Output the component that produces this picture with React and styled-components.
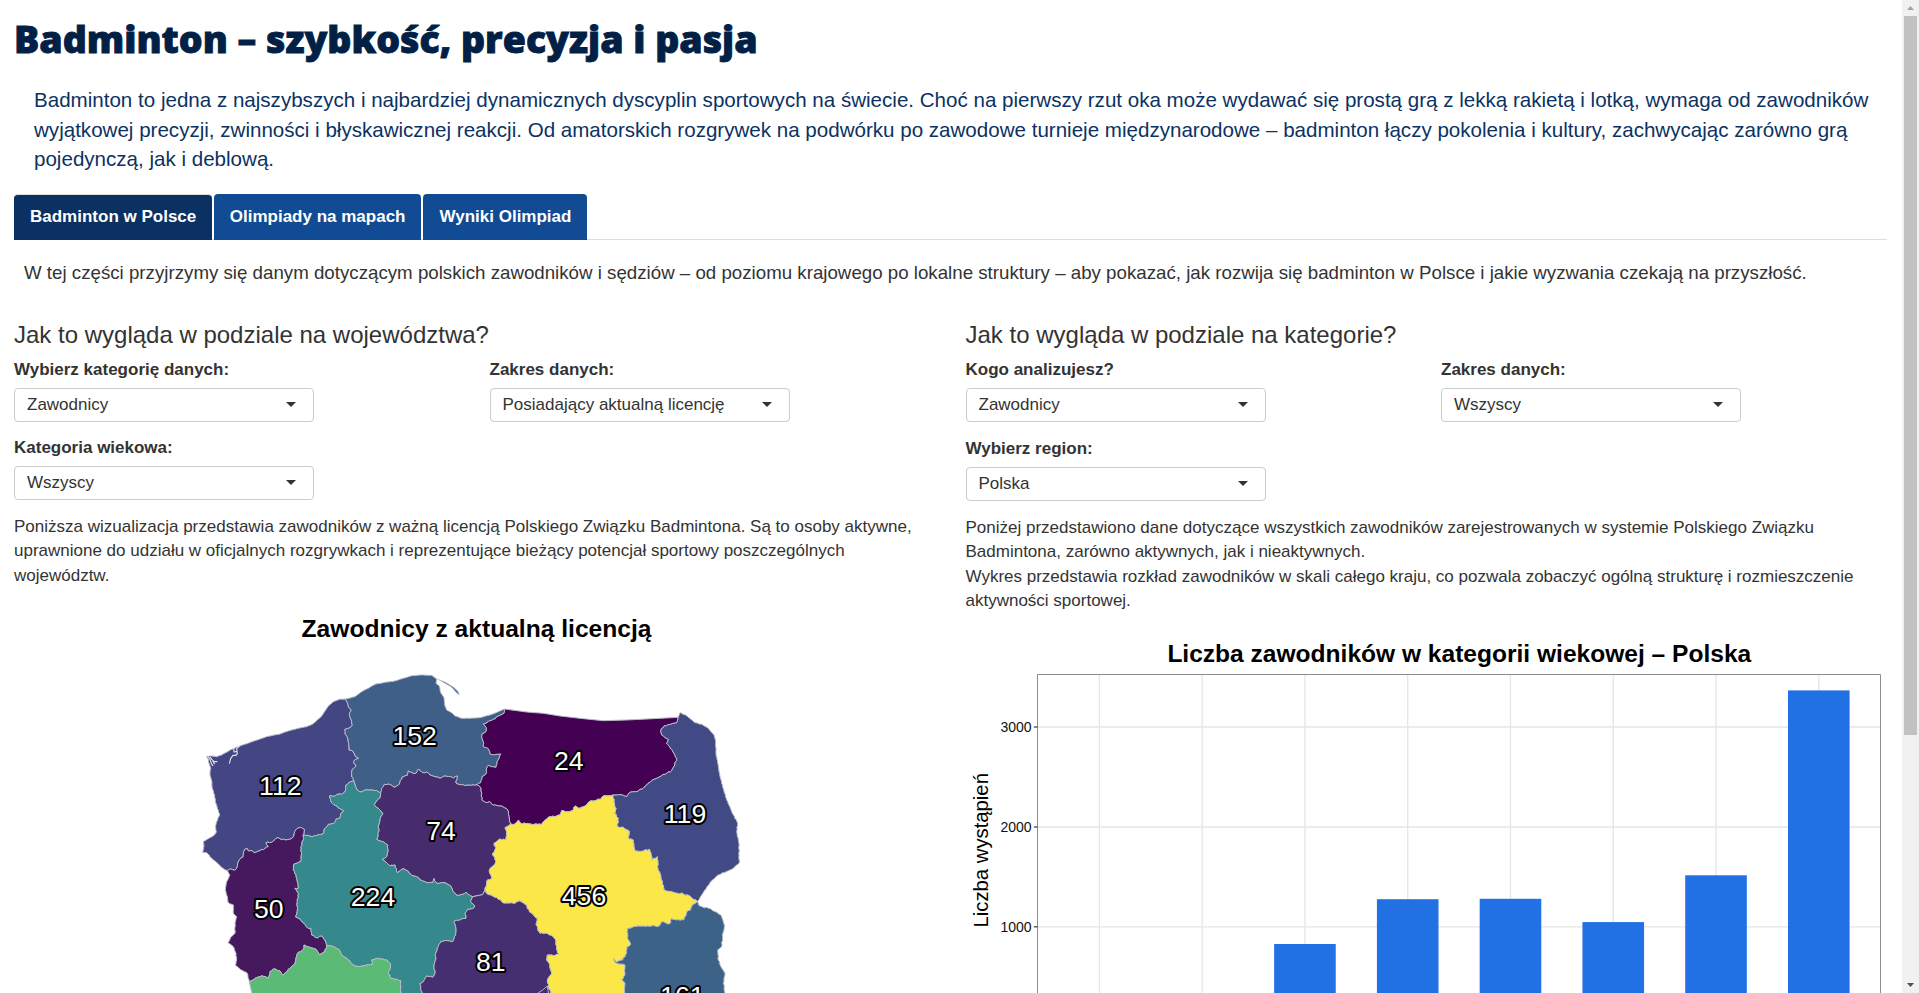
import React from "react";
import styled, { createGlobalStyle } from "styled-components";

const GlobalStyle = createGlobalStyle`
  * { box-sizing: border-box; }
  html, body { margin: 0; padding: 0; overflow: hidden; }
  body {
    background: #fff;
    color: #333;
    font-family: "Liberation Sans", Arial, sans-serif;
    font-size: 17px;
  }
`;

const Window = styled.div`
  display: flex;
  width: 1919px;
  height: 993px;
  overflow: hidden;
`;

const Page = styled.main`
  flex: 1;
  min-width: 0;
  height: 993px;
  overflow: hidden;
  padding: 0 15px 0 14px;
`;

const Title = styled.h1`
  margin: 0;
  padding-top: 14px;
  height: 78px;
  color: #021f45;
  font-family: "Open Sans", "Noto Sans", sans-serif;
  font-size: 37.5px;
  font-weight: 800;
  line-height: 50px;
  -webkit-text-stroke: 0.9px #021f45;
  white-space: nowrap;
`;

const Intro = styled.p`
  margin: 0;
  padding: 7px 0 0 20px;
  height: 116px;
  color: #0b3263;
  font-size: 20.57px;
  line-height: 29.5px;
`;

const TabBar = styled.nav`
  display: flex;
  align-items: flex-end;
  gap: 2px;
  height: 46px;
  border-bottom: 1px solid #ddd;
`;

const Tab = styled.button`
  height: 46px;
  margin-bottom: -1px;
  padding: ${(p) => (p.$active ? "0 15.5px 2px 16px" : "0 16px 1px")};
  border: 0;
  border-top: ${(p) => (p.$active ? "1px solid #ddd" : "0")};
  border-radius: 4px 4px 0 0;
  background: ${(p) => (p.$active ? "#0a3161" : "#114b94")};
  color: #fff;
  font: bold 17px "Liberation Sans", Arial, sans-serif;
  white-space: nowrap;
`;

const Lead = styled.p`
  margin: 0;
  padding: 20px 0 0 10px;
  height: 73px;
  font-size: 18.72px;
  line-height: 26px;
  white-space: nowrap;
`;

const Columns = styled.div`
  display: grid;
  grid-template-columns: 951.5px 1fr;
`;

const Column = styled.section`
  min-width: 0;
`;

const Heading = styled.h3`
  margin: 0;
  padding-top: 8px;
  height: 44px;
  font-size: 24px;
  font-weight: 400;
  line-height: 27px;
`;

const Fields = styled.div`
  display: grid;
  grid-template-columns: 475.5px 300px;
  row-gap: ${(p) => p.$gap}px;
`;

const Field = styled.label`
  display: block;
  width: 300px;
`;

const FieldLabel = styled.span`
  display: block;
  height: 31px;
  font-weight: bold;
  line-height: 26px;
  white-space: nowrap;
`;

const Select = styled.span`
  display: flex;
  align-items: center;
  justify-content: space-between;
  height: 34px;
  padding: 0 17px 0 12px;
  border: 1px solid #ccc;
  border-radius: 4px;
  white-space: nowrap;
`;

const Caret = styled.i`
  width: 0;
  height: 0;
  margin-bottom: 1px;
  border: 5px solid transparent;
  border-top-color: #333;
  border-bottom: 0;
`;

const Note = styled.p`
  margin: 0;
  padding-top: 15px;
  width: 915px;
  height: ${(p) => p.$height}px;
  line-height: 24.29px;
`;

const Drawing = styled.svg`
  display: block;
  overflow: hidden;
  font-family: "Liberation Sans", Arial, sans-serif;
`;

const Track = styled.aside`
  display: flex;
  flex-direction: column;
  align-items: center;
  width: 17px;
  height: 993px;
  background: #f1f1f1;
`;

const Arrow = styled.svg`
  display: block;
  width: 17px;
  height: 16px;
`;

const Thumb = styled.div`
  width: 13px;
  height: 719px;
  margin-bottom: auto;
  background: #c1c1c1;
`;

/* Borders between voivodeships, in thirds of a pixel. */
const P = (s, dx = 0) =>
  s.split(" ").map((t) => {
    const [x, y] = t.split(",").map(Number);
    return [x + dx, y];
  });

let seed = 7;
const rnd = () => {
  seed = (seed * 16807) % 2147483647;
  return seed / 2147483647 - 0.5;
};
const rough = (pts, amount = 5) => {
  const out = [pts[0]];
  for (let i = 1; i < pts.length; i++) {
    const [ax, ay] = pts[i - 1];
    const [bx, by] = pts[i];
    const len = Math.hypot(bx - ax, by - ay);
    const n = Math.max(1, Math.round(len / 6));
    for (let k = 1; k < n; k++) {
      const t = k / n;
      out.push([ax + (bx - ax) * t + rnd() * amount, ay + (by - ay) * t + rnd() * amount]);
    }
    out.push([bx, by]);
  }
  return out;
};
const rev = (a) => [...a].reverse();

const E = 810;
const zpCoast = rough(P("465,117 448,118 430,125 415,138 405,153 395,168 380,182 368,192 350,200 320,206 295,213 270,222 230,230 195,242 150,258 120,270 95,285 80,290 65,288 50,289"), 1);
const zpWest = rough(P("50,289 55,298 58,312 62,325 60,345 66,365 67,385 74,405 76,425 82,445 89,463 80,485 76,500 79,515 70,528 55,536 40,544 42,558 38,577 50,578 60,590 75,603 90,617 103,628 112,632"), 2);
const zpLub = rough(P("112,632 122,627 134,631 142,620 148,600 158,592 164,568 172,566 175,573 185,572 192,578 210,572 235,560 228,548 245,547 262,533 275,539 298,538 308,533 314,515 322,505 333,502 343,508 340,524"), 3);
const zpWlkp = rough(P("340,524 352,526 368,530 385,524 398,522 405,505 415,493 432,490 438,478 450,474 452,462 461,453 448,445 436,436 425,428 418,408 430,409 440,404 455,403 466,393 468,375 480,365 491,362"), 3);
const zpPom = rough(P("491,362 485,345 487,328 498,318 490,308 494,300 506,295 495,288 490,275 477,270 474,240 468,225 463,210 475,205 487,196 484,180 478,165 484,150 475,140 472,128 465,117"), 3);
const pomCoast = rough(P("465,117 495,110 515,95 535,85 555,73 580,68 610,64 640,55 665,47 695,45 725,46 740,57 738,70 748,78 752,98 762,113 764,135 770,150 785,158 795,168 815,175 840,175 870,173 900,165 925,155 943,147"), 1);
const pomWm = rough(P("943,147 942,160 930,166 910,178 880,192 889,203 888,215 876,222 875,232 880,245 880,260 895,266 900,282 915,284 933,282 924,300 918,322 905,320 895,316 890,324 888,342 876,350 872,368 861,374"), 3);
const pomKp = rough(P("861,374 845,376 825,377 815,374 802,372 797,364 802,348 790,355 782,350 765,348 750,355 738,351 720,345 710,336 698,338 686,327 678,340 665,338 655,333 652,346 636,352 628,372 615,382 600,374 583,373 575,385 572,401"), 3);
const pomWlkp = rough(P("572,401 560,392 540,390 525,390 510,396 500,388 495,375 491,362"), 3);
const wlkpKp = rough(P("572,401 570,412 560,422 552,434 565,445 578,460 570,475 566,495 566,515 560,538 580,545 593,555 594,575 590,590 577,597 590,608 600,618 615,615 622,638 640,626 655,634 665,646 680,650 690,660 710,668 728,668 732,656 740,670 765,668 782,678 788,692 800,706 822,702 828,696 838,705 848,710"), 3);
const kpLodz = P("848,710 868,706 878,704 885,690");
const wlkpLodz = rough(P("848,710 842,725 855,738 850,745 833,748 825,760 828,775 810,780 793,783 797,800 797,825 788,845 770,842 752,845 745,860 737,880 737,900 732,915 735,940 728,952 710,948 700,965 690,970 692,985 700,1010"), 3);
const lubWlkp = rough(P("340,524 340,540 333,560 334,585 332,605 312,612 310,630 318,645 322,665 325,685 315,685 325,700 322,725 322,750 318,772 330,777 345,793 352,803 363,805 365,825 380,833 395,828 405,840 410,857"), 3);
const lubDs = rough(P("410,857 405,875 388,884 378,868 360,862 342,855 340,868 322,880 315,912 300,925 280,945 268,932 250,927 240,935 235,955 215,947 195,955 178,966"), 3);
const lubWest = rough(P("112,632 120,645 110,665 106,690 112,710 115,728 130,735 130,760 140,770 135,790 135,820 122,832 114,848 130,860 138,880 140,900 136,915 150,928 172,940 178,966"), 2);
const wlkpDs = rough(P("410,857 425,858 445,867 455,885 475,900 490,915 510,920 535,915 548,912 545,900 565,895 590,900 602,912 600,925 595,935 602,955 622,958 632,962 632,1010"), 3);
const kpWm = rough(P("51,374 60,380 65,400 65,420 78,428 88,425 100,435 120,438 138,445 145,455 148,475 152,492", E), 3);
const kpMaz = rough(P("152,492 135,503 140,515 138,540 120,537 102,550 108,562 98,580 108,603 96,620 88,630 95,655 82,660 78,680 75,690", E), 4);
const wmMaz = rough(P("152,492 165,492 175,480 182,490 210,492 245,494 255,480 270,470 285,470 300,465 305,452 322,455 340,450 345,438 360,445 380,435 388,425 410,420 422,418 432,407 458,405", E), 4);
const wmPodl = rough(P("458,405 480,404 500,410 508,398 530,395 555,380 575,362 600,350 635,332 645,312 650,295 642,280 630,262 620,250 625,238 605,225 602,212 612,198 635,192 650,188 655,172", E), 3);
const wmCoast = P("133,147 200,156 250,160 300,168 370,176 430,182 500,180 580,176 655,172", E);
const podlEast = rough(P("655,172 660,158 680,167 692,178 705,188 725,193 745,205 762,225 767,245 768,280 775,320 785,370 800,420 815,455 833,490 830,515 836,545 838,608 815,628 790,638 770,648 750,668 735,690 713,724", E), 2);
const mazPodl = rough(P("458,405 462,425 468,445 463,460 475,475 472,500 490,502 508,515 505,535 520,540 525,573 550,573 568,568 573,580 575,600 592,590 592,620 600,640 605,660 612,690 640,697 670,702 690,708 700,718 713,724", E), 4);
const mazLbl = rough(P("713,724 697,735 692,750 680,755 672,780 650,780 635,775 628,792 605,785 598,798 575,798 550,798 520,800 502,805 502,835 512,852 500,862 500,880 488,900 470,906 462,896 466,908 480,912 495,915 495,945 485,960 495,970 492,1010", E), 4);
const lblEast = rough(P("713,724 718,738 745,745 765,755 785,768 793,795 788,830 785,860 773,870 775,900 785,925 795,940 790,970 798,1010", E), 3);
const lodzMaz = rough(P("75,690 80,700 98,708 110,712 130,728 165,730 180,722 200,735 208,755 232,775 228,795 240,820 262,820 280,830 288,845 290,868 297,882 280,887 262,885 260,898 270,915 275,940 262,960 265,980 280,1010", E), 4);

const REGIONS = [
  { fill: "#444583", shape: [zpCoast, zpWest, zpLub, zpWlkp, zpPom] },
  { fill: "#3f5f88", shape: [pomCoast, pomWm, pomKp, pomWlkp, zpPom] },
  { fill: "#440052", shape: [wmCoast, rev(wmPodl), rev(wmMaz), rev(kpWm), rev(pomWm)] },
  { fill: "#414a85", shape: [podlEast, rev(mazPodl), wmPodl] },
  { fill: "#46185e", shape: [rev(lubWest), zpLub, lubWlkp, lubDs] },
  { fill: "#462b6d", shape: [rev(pomKp), kpWm, kpMaz, rev(kpLodz), rev(wlkpKp)] },
  { fill: "#35888b", shape: [lubWlkp, wlkpDs, rev(wlkpLodz), rev(wlkpKp), pomWlkp, rev(zpWlkp)] },
  { fill: "#5bbb76", shape: [lubDs, [[188, 1010]], rev(wlkpDs)] },
  { fill: "#452f70", shape: [kpLodz, lodzMaz, rev(wlkpLodz)] },
  { fill: "#fbe748", shape: [wmMaz, mazPodl, mazLbl, rev(lodzMaz), rev(kpMaz)] },
  { fill: "#3c6387", shape: [lblEast, rev(mazLbl)] },
];

const toPath = (parts) => {
  const pts = parts.flat();
  return "M" + pts.map(([x, y]) => `${x.toFixed(1)},${y.toFixed(1)}`).join("L") + "Z";
};

const COUNTS = [
  [112, 280.3, 785.5], [152, 414.7, 735], [74, 441, 830.5], [50, 268.7, 908.8],
  [224, 373, 896.8], [24, 568.7, 760.5], [119, 685, 813.8], [456, 584, 895.8],
  [81, 490.7, 961], [161, 682.3, 995.5],
];

const MapChart = () => (
  <Drawing width="915" height="393" viewBox="14 600 915 393">
    <text x="476.5" y="636.5" textAnchor="middle" fontSize="24.6" fontWeight="bold" fill="#000">
      Zawodnicy z aktualną licencją
    </text>
    <g transform="translate(190 660) scale(.33333)" strokeLinejoin="round">
      {REGIONS.map((r) => (
        <path key={r.fill} d={toPath(r.shape)} fill={r.fill} stroke="#b9bcc4" strokeWidth="3" />
      ))}
      <path d="M740,56L765,66L790,81L804,94L808,105L799,98L785,82L762,68Z" fill="#5d7699" stroke="#c5cbd4" strokeWidth="1" />
      <path d="M1040,1002L1058,990L1072,978L1076,1002" fill="#462a6c" stroke="#b9bcc4" strokeWidth="3" />
      <g fill="none" stroke="#dfe0e8" strokeWidth="3.4">
        <path d="M53,290L60,298L64,310L69,318M60,291L66,299L72,304L82,305M68,302L74,313" />
        <path d="M150,257L140,266L142,280L138,286L129,286L122,296L118,311M131,264L132,276L141,274" />
      </g>
    </g>
    <g fontSize="26.6" textAnchor="middle" fill="#fff" stroke="#000" strokeWidth="4" strokeLinejoin="round" paintOrder="stroke">
      {COUNTS.map(([n, x, y]) => (
        <text key={n} x={x} y={y + 9.5}>{n}</text>
      ))}
    </g>
  </Drawing>
);

const GRID_X = [0, 1, 2, 3, 4, 5, 6, 7].map((i) => 1099.4 + i * 102.77);
const TICKS = [[3000, 727], [2000, 827], [1000, 926.8]];
const BARS = [[2, 944], [3, 899.2], [4, 898.8], [5, 922.1], [6, 875.3], [7, 690.4]];

const BarChart = () => (
  <Drawing width="921" height="368" viewBox="966 625 921 368">
    <text x="1459.3" y="661.5" textAnchor="middle" fontSize="24.55" fontWeight="bold" fill="#000">
      Liczba zawodników w kategorii wiekowej – Polska
    </text>
    <g stroke="#e6e6e6" strokeWidth="1.3">
      {GRID_X.map((x) => <line key={x} x1={x} x2={x} y1="674" y2="993" />)}
      {TICKS.map(([n, y]) => <line key={n} x1="1037" x2="1880" y1={y} y2={y} />)}
    </g>
    {BARS.map(([i, top]) => (
      <rect key={i} x={GRID_X[i] - 30.8} y={top} width="61.6" height={1000 - top} fill="#2171e5" />
    ))}
    <path d="M1037.5,993V674.5H1880.5V993" fill="none" stroke="#8c8c8c" />
    {TICKS.map(([n, y]) => (
      <g key={n}>
        <line x1="1033.8" x2="1037.5" y1={y} y2={y} stroke="#444" strokeWidth="1.3" />
        <text x="1031.6" y={y + 5} textAnchor="end" fontSize="14" fill="#111">{n}</text>
      </g>
    ))}
    <text transform="translate(987.5 850.3) rotate(-90)" textAnchor="middle" fontSize="20.3" fill="#000">
      Liczba wystąpień
    </text>
  </Drawing>
);

const Picker = ({ label, value }) => (
  <Field>
    <FieldLabel>{label}</FieldLabel>
    <Select>{value}<Caret /></Select>
  </Field>
);

export default function App() {
  return (
    <Window>
      <GlobalStyle />
      <Page>
        <Title>Badminton – szybkość, precyzja i pasja</Title>
        <Intro>
          Badminton to jedna z najszybszych i najbardziej dynamicznych dyscyplin sportowych na świecie. Choć na pierwszy rzut oka może wydawać się prostą grą z lekką rakietą i lotką, wymaga od zawodników wyjątkowej precyzji, zwinności i błyskawicznej reakcji. Od amatorskich rozgrywek na podwórku po zawodowe turnieje międzynarodowe – badminton łączy pokolenia i kultury, zachwycając zarówno grą pojedynczą, jak i deblową.
        </Intro>
        <TabBar>
          <Tab $active>Badminton w Polsce</Tab>
          <Tab>Olimpiady na mapach</Tab>
          <Tab>Wyniki Olimpiad</Tab>
        </TabBar>
        <Lead>
          W tej części przyjrzymy się danym dotyczącym polskich zawodników i sędziów – od poziomu krajowego po lokalne struktury – aby pokazać, jak rozwija się badminton w Polsce i jakie wyzwania czekają na przyszłość.
        </Lead>
        <Columns>
          <Column>
            <Heading>Jak to wygląda w podziale na województwa?</Heading>
            <Fields $gap={13}>
              <Picker label="Wybierz kategorię danych:" value="Zawodnicy" />
              <Picker label="Zakres danych:" value="Posiadający aktualną licencję" />
              <Picker label="Kategoria wiekowa:" value="Wszyscy" />
            </Fields>
            <Note $height={100}>
              Poniższa wizualizacja przedstawia zawodników z ważną licencją Polskiego Związku Badmintona. Są to osoby aktywne, uprawnione do udziału w oficjalnych rozgrywkach i reprezentujące bieżący potencjał sportowy poszczególnych województw.
            </Note>
            <MapChart />
          </Column>
          <Column>
            <Heading>Jak to wygląda w podziale na kategorie?</Heading>
            <Fields $gap={14}>
              <Picker label="Kogo analizujesz?" value="Zawodnicy" />
              <Picker label="Zakres danych:" value="Wszyscy" />
              <Picker label="Wybierz region:" value="Polska" />
            </Fields>
            <Note $height={124}>
              Poniżej przedstawiono dane dotyczące wszystkich zawodników zarejestrowanych w systemie Polskiego Związku Badmintona, zarówno aktywnych, jak i nieaktywnych.
              <br />
              Wykres przedstawia rozkład zawodników w skali całego kraju, co pozwala zobaczyć ogólną strukturę i rozmieszczenie aktywności sportowej.
            </Note>
            <BarChart />
          </Column>
        </Columns>
      </Page>
      <Track>
        <Arrow viewBox="0 0 17 16"><path d="M5,10L8.5,6L12,10Z" fill="#a3a3a3" /></Arrow>
        <Thumb />
        <Arrow viewBox="0 0 17 16"><path d="M5,6L8.5,10L12,6Z" fill="#505050" /></Arrow>
      </Track>
    </Window>
  );
}
